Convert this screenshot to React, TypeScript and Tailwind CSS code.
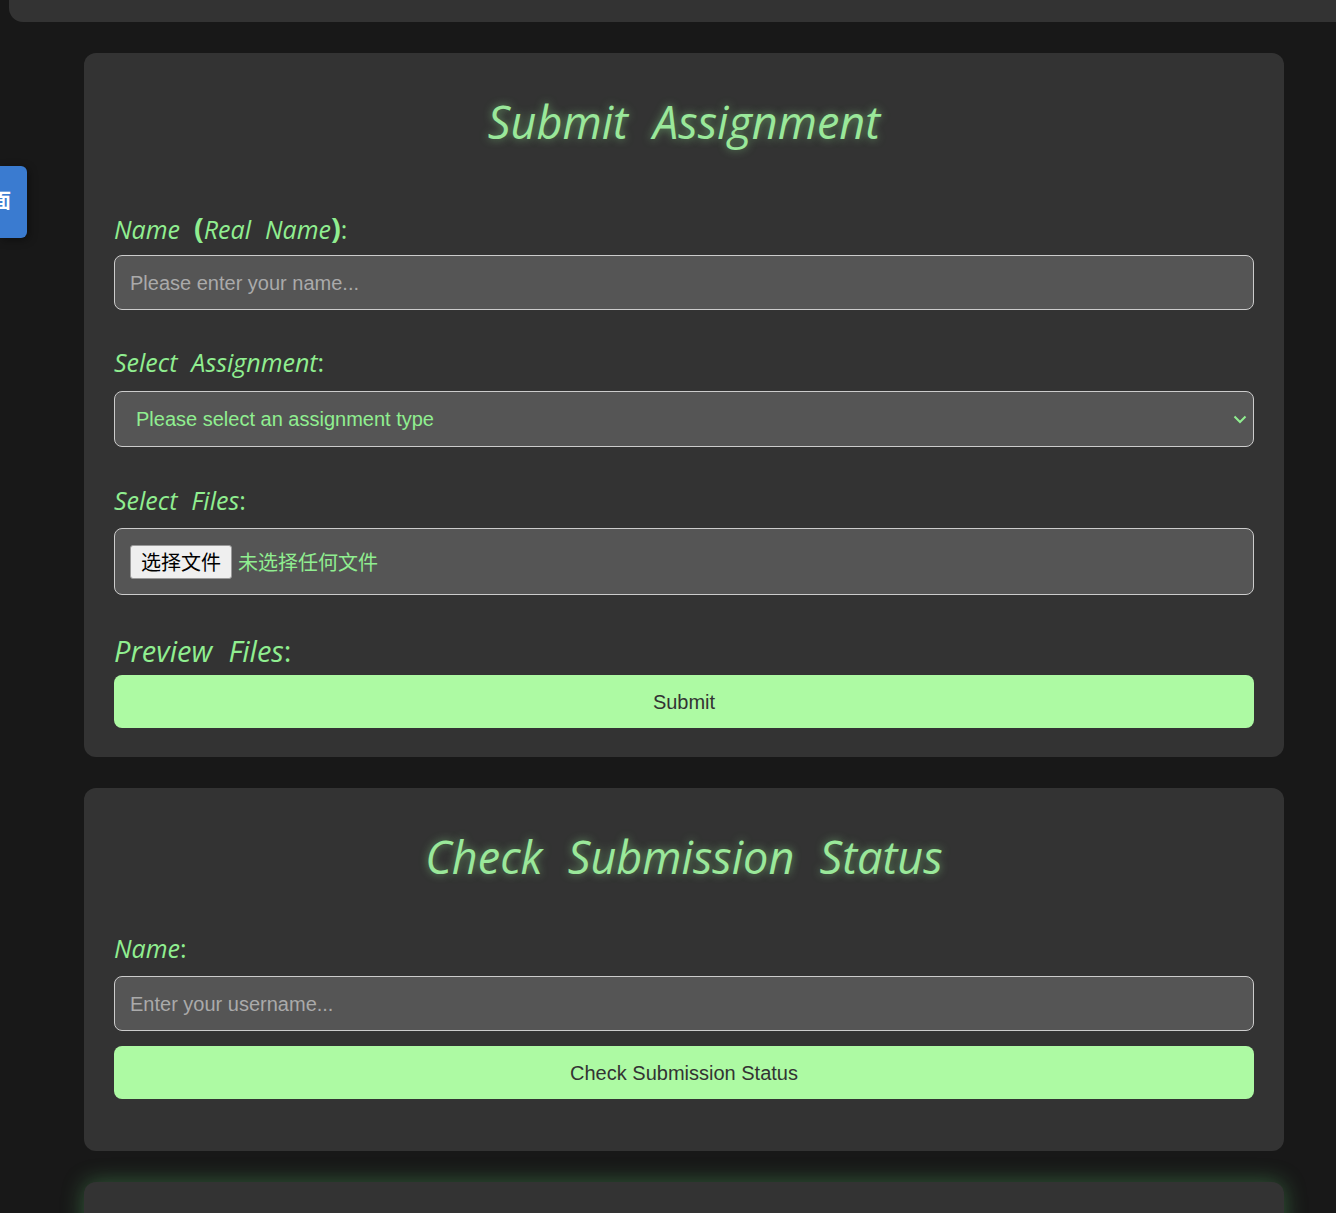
import React from "react";

const labelFont = { fontFamily: '"Open Sans", "Noto Sans", sans-serif' };

function Label({ children, size = 25, h = 30, className = "" }: { children: React.ReactNode; size?: number; h?: number; className?: string }) {
  return (
    <div
      className={`italic text-[#90ee90] whitespace-pre [word-spacing:0.3em] ${className}`}
      style={{ ...labelFont, fontSize: size, height: h, lineHeight: `${h}px` }}
    >
      {children}
    </div>
  );
}

function Title({ children }: { children: React.ReactNode }) {
  return (
    <div
      className="h-[78px] flex items-center justify-center italic text-[45px] text-[#9ae89a] [word-spacing:0.3em] [text-shadow:0_0_8px_rgba(144,238,144,0.55)]"
      style={labelFont}
    >
      {children}
    </div>
  );
}

const sans = { fontFamily: '"Liberation Sans", Arial, sans-serif' };

export default function App() {
  return (
    <div className="min-h-[1213px] bg-[#181818] relative overflow-hidden" style={sans}>
      {/* top bar */}
      <div className="ml-[9px] h-[22px] bg-[#333333] rounded-bl-[14px]" />

      {/* blue side tab */}
      <div className="absolute left-0 top-[166px] w-[27px] h-[72px] bg-[#3a7bd0] rounded-r-[6px] shadow-[2px_2px_8px_rgba(0,0,0,0.4)] overflow-hidden">
        <span
          className="absolute left-[-9px] top-[24px] text-white font-bold text-[20px] leading-none"
          style={{ fontFamily: '"Noto Sans CJK SC", sans-serif' }}
        >
          面
        </span>
      </div>

      <div className="w-[1200px] ml-[84px] mt-[31px] flex flex-col gap-[31px]">
        {/* card 1 */}
        <div className="bg-[#333333] rounded-[12px] px-[30px] pt-[30px] pb-[29px]">
          <Title>Submit Assignment</Title>
          <Label className="mt-[52px]">
            <span>Name </span>
            <span className="not-italic font-bold text-[29px]">(</span>
            <span>Real Name</span>
            <span className="not-italic font-bold text-[29px]">)</span>
            <span className="not-italic">:</span>
          </Label>
          <div className="mt-[12px] h-[55px] bg-[#555555] border border-[#cccccc] rounded-[8px] flex items-center px-[15px] text-[20px] text-[#aaaaaa]">
            Please enter your name...
          </div>
          <Label className="mt-[37px]">
            Select Assignment<span className="not-italic">:</span>
          </Label>
          <div className="mt-[14px] h-[56px] bg-[#555555] border border-[#cccccc] rounded-[8px] flex items-center justify-between pl-[21px] pr-[6px] text-[20px] text-[#90ee90]">
            <span>Please select an assignment type</span>
            <svg width="14" height="10" viewBox="0 0 14 10" fill="none">
              <path d="M1.5 2.5 L7 8 L12.5 2.5" stroke="#90ee90" strokeWidth="2" />
            </svg>
          </div>
          <Label className="mt-[38px]">
            Select Files<span className="not-italic">:</span>
          </Label>
          <div className="mt-[13px] h-[67px] bg-[#555555] border border-[#cccccc] rounded-[8px] flex items-center px-[15px] gap-[6px]" style={{ fontFamily: '"Noto Sans CJK SC", sans-serif' }}>
            <div className="h-[34px] px-[10px] flex items-center bg-[#efefef] border border-[#999999] rounded-[3px] text-[20px] text-black">
              选择文件
            </div>
            <span className="text-[20px] text-[#90ee90]">未选择任何文件</span>
          </div>
          <Label size={29} h={34} className="mt-[39px]">
            Preview Files<span className="not-italic">:</span>
          </Label>
          <div className="mt-[7px] h-[53px] bg-[#adfaa3] rounded-[8px] flex items-center justify-center text-[20px] text-[#333333]">
            Submit
          </div>
        </div>

        {/* card 2 */}
        <div className="bg-[#333333] rounded-[12px] px-[30px] pt-[30px] pb-[52px]">
          <Title>Check Submission Status</Title>
          <Label className="mt-[37px]">
            Name<span className="not-italic">:</span>
          </Label>
          <div className="mt-[13px] h-[55px] bg-[#555555] border border-[#cccccc] rounded-[8px] flex items-center px-[15px] text-[20px] text-[#aaaaaa]">
            Enter your username...
          </div>
          <div className="mt-[15px] h-[53px] bg-[#adfaa3] rounded-[8px] flex items-center justify-center text-[20px] text-[#333333]">
            Check Submission Status
          </div>
        </div>

        {/* card 3 */}
        <div className="bg-[#333333] rounded-[12px] h-[200px] shadow-[0_0_22px_rgba(100,220,120,0.35)]" />
      </div>
    </div>
  );
}
